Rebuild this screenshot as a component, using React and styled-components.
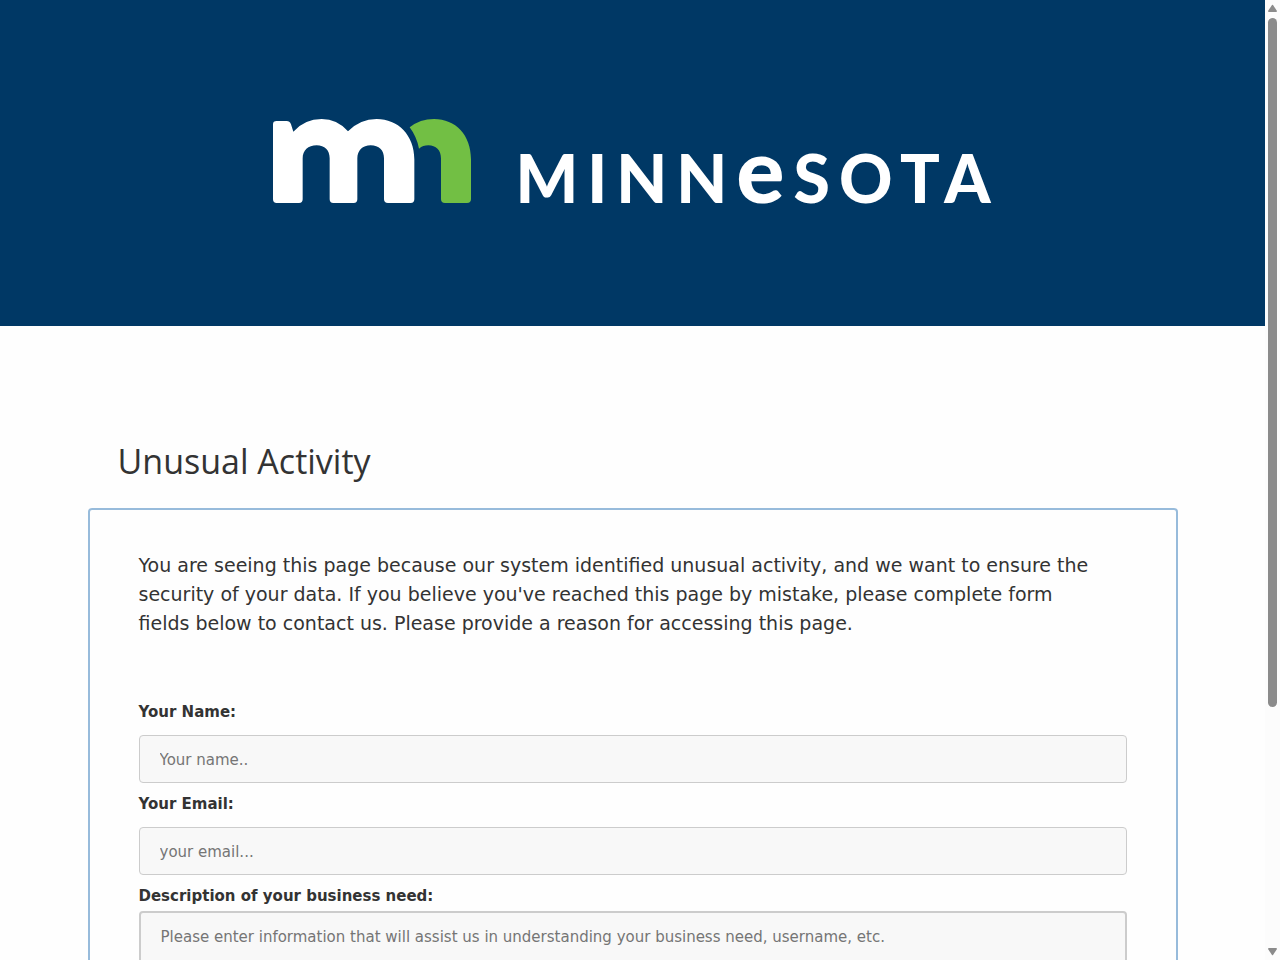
import React, { useState } from 'react'
import styled, { createGlobalStyle } from 'styled-components'

const GlobalStyle = createGlobalStyle`
    * {
      box-sizing: border-box;
    }

    body {
      margin: 0;
      background: #fefefe;
      color: #333;
      font-family: Verdana, "DejaVu Sans", sans-serif;
      font-size: 15px;
    }
`

const Shell = styled.div`
    display: flex;
    height: 100vh;
`

const Page = styled.div`
    flex: 1;
    min-width: 0;
    overflow-y: auto;
    scrollbar-width: none;
`

const Header = styled.header`
    display: flex;
    justify-content: center;
    align-items: baseline;
    gap: 44px;
    padding: 119px 24px 115px;
    background: #003865;
    color: white;

    @media (max-width: 800px) {
      flex-wrap: wrap;
      padding: 48px 24px;
    }
`

const Mark = styled.svg`
    flex: none;
    width: 198px;
    height: 84px;
`

const Wordmark = styled.span`
    margin-right: -8px;
    font-family: Lato, sans-serif;
    font-size: 66px;
    font-weight: 900;
    line-height: 66px;
    letter-spacing: 9px;
`

const BigLetter = styled.span`
    font-size: 90px;
    line-height: 0;
`

const Main = styled.main`
    max-width: 1170px;
    margin: 0 auto;
    padding: 110px 40px 60px;

    @media (max-width: 600px) {
      padding: 40px 15px;
    }
`

const Title = styled.h1`
    margin: 0 0 22px;
    padding: 0 30px;
    font-family: "Segoe UI", "Open Sans", sans-serif;
    font-size: 34px;
    font-weight: 400;
    line-height: 50px;
`

const ContactForm = styled.form`
    display: flex;
    flex-direction: column;
    padding: 41px 49px;
    border: 2px solid #97bbdb;
    border-radius: 4px;

    @media (max-width: 600px) {
      padding: 20px;
    }
`

const Intro = styled.p`
    max-width: 970px;
    margin: 0 0 64px;
    font-size: 19px;
    line-height: 29px;
`

const Label = styled.label`
    font-weight: 700;
    line-height: 20px;
`

const Input = styled.input`
    width: 100%;
    height: 48px;
    margin: 13px 0 11px;
    padding: 13px 20px 11px;
    border: 1px solid #ccc;
    border-radius: 4px;
    background: #f8f8f8;
    font-family: inherit;
    font-size: 15px;

    &::placeholder {
      color: #757575;
    }
`

const TextArea = styled.textarea`
    width: 100%;
    height: 150px;
    margin: 5px 0 20px;
    padding: 13px 20px;
    border: 2px solid #ccc;
    border-radius: 4px;
    background: #f8f8f8;
    font-family: inherit;
    font-size: 15px;
    line-height: 22px;
    resize: none;

    &::placeholder {
      color: #757575;
    }
`

const ScrollTrack = styled.div`
    flex: none;
    display: flex;
    flex-direction: column;
    align-items: center;
    width: 15px;
    padding: 4px 0;
    background: #fcfcfc;
`

const ScrollArrow = styled.svg`
    flex: none;
    width: 9px;
    height: 8px;
    fill: #8b8b8b;
`

const ScrollRail = styled.div`
    flex: 1;
    width: 9px;
    margin: 6px 0 12px;
`

const ScrollThumb = styled.div`
    height: 75%;
    border-radius: 5px;
    background: #8b8b8b;
`

const App = () => {

    const [ form, setForm ] = useState({ name: '', email: '', need: '' });

    const handleChange = e => setForm({ ...form, [e.target.name]: e.target.value })

  return (
    <Shell>
      <GlobalStyle />
      <Page>
        <Header>
          <Mark viewBox="37 42 594 252" aria-hidden="true">
            <path fill="#fff" d="M48 48 H78 Q87 48 91 58 L98 80 Q132 42 183 42 Q230 42 262 79 Q298 42 348 42 C412 42 461 90 461 163 V283 Q461 294 450 294 H382 Q370 294 370 283 V160 C370 136 355 121 330 121 C306 121 290 137 290 160 V283 Q290 294 279 294 H218 Q207 294 207 283 V160 C207 136 192 121 168 121 C142 121 126 137 126 160 V283 Q126 294 115 294 H48 Q37 294 37 283 V58 Q37 48 48 48 Z" />
            <path fill="#72bf44" d="M447 67 Q478 42 520 42 C585 42 631 90 631 163 V283 Q631 294 619 294 H553 Q541 294 541 283 V160 C541 136 526 121 503 121 Q487 121 475 131 Q468 95 447 67 Z" />
          </Mark>
          <Wordmark>MINN<BigLetter>e</BigLetter>SOTA</Wordmark>
        </Header>
        <Main>
          <Title>Unusual Activity</Title>
          <ContactForm onSubmit={e => e.preventDefault()}>
            <Intro>
              You are seeing this page because our system identified unusual activity, and we want to ensure the security of your data. If you believe you've reached this page by mistake, please complete form fields below to contact us. Please provide a reason for accessing this page.
            </Intro>
            <Label htmlFor="name">Your Name:</Label>
            <Input id="name" name="name" type="text" placeholder="Your name.." value={form.name} onChange={handleChange} />
            <Label htmlFor="email">Your Email:</Label>
            <Input id="email" name="email" type="email" placeholder="your email..." value={form.email} onChange={handleChange} />
            <Label htmlFor="need">Description of your business need:</Label>
            <TextArea id="need" name="need" placeholder="Please enter information that will assist us in understanding your business need, username, etc." value={form.need} onChange={handleChange} />
          </ContactForm>
        </Main>
      </Page>
      <ScrollTrack aria-hidden="true">
        <ScrollArrow viewBox="0 0 9 8"><path d="M4 1 Q4.500 .4 5 1 L9 7 Q9 8 8 8 H1 Q0 8 0 7 Z" /></ScrollArrow>
        <ScrollRail><ScrollThumb /></ScrollRail>
        <ScrollArrow viewBox="0 0 9 8"><path d="M4 7 Q4.500 7.600 5 7 L9 1 Q9 0 8 0 H1 Q0 0 0 1 Z" /></ScrollArrow>
      </ScrollTrack>
    </Shell>
  )
}

export default App;
